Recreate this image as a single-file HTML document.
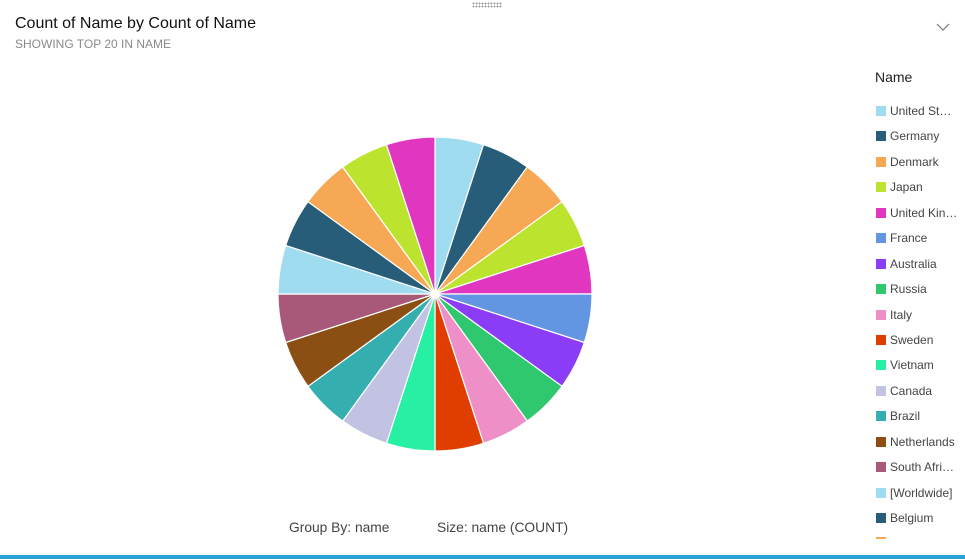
<!DOCTYPE html>
<html><head><style>
body{margin:0;width:965px;height:559px;background:#fff;font-family:"Liberation Sans",sans-serif;position:relative;overflow:hidden}
.t{position:absolute;left:15px;top:15px;font-size:16px;color:#111}
.s{position:absolute;left:15px;top:37px;font-size:12px;color:#8a8a8a}
.lg{position:absolute;left:875px;top:69px;font-size:14px;color:#222}
.it{position:absolute;left:876px;font-size:12px;color:#444;white-space:nowrap}
.it i{display:inline-block;width:10px;height:10px;margin-right:4px;vertical-align:-1px}
.f{position:absolute;top:520px;font-size:13.8px;color:#444}
</style></head><body>
<div style="position:absolute;left:472px;top:2px;width:30px;height:6px;background-image:radial-gradient(#999 0.8px,transparent 1px);background-size:3px 3px"></div>
<div class="t">Count of Name by Count of Name</div>
<div class="s">SHOWING TOP 20 IN NAME</div>
<svg style="position:absolute;left:936px;top:22px" width="14" height="10"><path d="M1 2 L7 8 L13 2" fill="none" stroke="#777" stroke-width="1.2"/></svg>
<svg style="position:absolute;left:0;top:0" width="965" height="559">
<g stroke="#fff" stroke-width="1.2">
<path d="M435 294L435 137A157 157 0 0 1 483.5 144.7Z" fill="#a0dcf0"/>
<path d="M435 294L483.5 144.7A157 157 0 0 1 527.3 167Z" fill="#275d78"/>
<path d="M435 294L527.3 167A157 157 0 0 1 562 201.7Z" fill="#f6a854"/>
<path d="M435 294L562 201.7A157 157 0 0 1 584.3 245.5Z" fill="#bce42e"/>
<path d="M435 294L584.3 245.5A157 157 0 0 1 592 294Z" fill="#e136c0"/>
<path d="M435 294L592 294A157 157 0 0 1 584.3 342.5Z" fill="#6396e2"/>
<path d="M435 294L584.3 342.5A157 157 0 0 1 562 386.3Z" fill="#8b3cf7"/>
<path d="M435 294L562 386.3A157 157 0 0 1 527.3 421Z" fill="#30c86e"/>
<path d="M435 294L527.3 421A157 157 0 0 1 483.5 443.3Z" fill="#ef8fc8"/>
<path d="M435 294L483.5 443.3A157 157 0 0 1 435 451Z" fill="#e03d00"/>
<path d="M435 294L435 451A157 157 0 0 1 386.5 443.3Z" fill="#27f0a4"/>
<path d="M435 294L386.5 443.3A157 157 0 0 1 342.7 421Z" fill="#c2c2e2"/>
<path d="M435 294L342.7 421A157 157 0 0 1 308 386.3Z" fill="#35aeb0"/>
<path d="M435 294L308 386.3A157 157 0 0 1 285.7 342.5Z" fill="#8b4f14"/>
<path d="M435 294L285.7 342.5A157 157 0 0 1 278 294Z" fill="#a85878"/>
<path d="M435 294L278 294A157 157 0 0 1 285.7 245.5Z" fill="#a0dcf0"/>
<path d="M435 294L285.7 245.5A157 157 0 0 1 308 201.7Z" fill="#275d78"/>
<path d="M435 294L308 201.7A157 157 0 0 1 342.7 167Z" fill="#f6a854"/>
<path d="M435 294L342.7 167A157 157 0 0 1 386.5 144.7Z" fill="#bce42e"/>
<path d="M435 294L386.5 144.7A157 157 0 0 1 435 137Z" fill="#e136c0"/>
</g></svg>
<div class="lg">Name</div>
<div class="it" style="top:104px"><i style="background:#a0dcf0"></i>United St…</div>
<div class="it" style="top:129px"><i style="background:#275d78"></i>Germany</div>
<div class="it" style="top:155px"><i style="background:#f6a854"></i>Denmark</div>
<div class="it" style="top:180px"><i style="background:#bce42e"></i>Japan</div>
<div class="it" style="top:206px"><i style="background:#e136c0"></i>United Kin…</div>
<div class="it" style="top:231px"><i style="background:#6396e2"></i>France</div>
<div class="it" style="top:257px"><i style="background:#8b3cf7"></i>Australia</div>
<div class="it" style="top:282px"><i style="background:#30c86e"></i>Russia</div>
<div class="it" style="top:308px"><i style="background:#ef8fc8"></i>Italy</div>
<div class="it" style="top:333px"><i style="background:#e03d00"></i>Sweden</div>
<div class="it" style="top:358px"><i style="background:#27f0a4"></i>Vietnam</div>
<div class="it" style="top:384px"><i style="background:#c2c2e2"></i>Canada</div>
<div class="it" style="top:409px"><i style="background:#35aeb0"></i>Brazil</div>
<div class="it" style="top:435px"><i style="background:#8b4f14"></i>Netherlands</div>
<div class="it" style="top:460px"><i style="background:#a85878"></i>South Afri…</div>
<div class="it" style="top:486px"><i style="background:#a0dcf0"></i>[Worldwide]</div>
<div class="it" style="top:511px"><i style="background:#275d78"></i>Belgium</div>
<div style="position:absolute;left:876px;top:537px;width:10px;height:2px;background:#f6a854"></div>
<div style="position:absolute;left:860px;top:539px;width:105px;height:16px;background:#fff"></div>
<div class="f" style="left:289px">Group By: name</div>
<div class="f" style="left:437px">Size: name (COUNT)</div>
<div style="position:absolute;left:0;top:555px;width:965px;height:4px;background:#2aa0d8"></div>
</body></html>
